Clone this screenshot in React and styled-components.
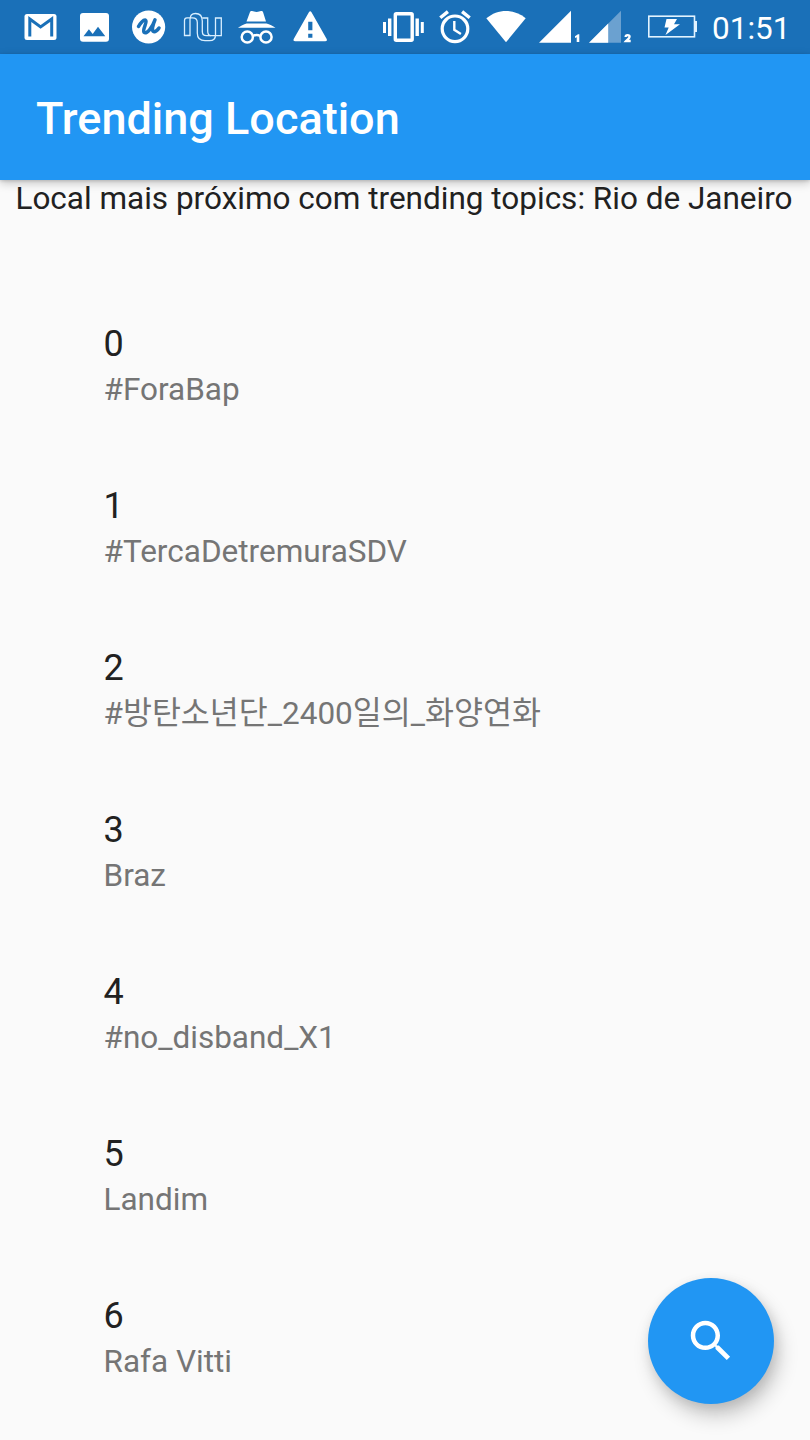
import React from "react";
import styled, { createGlobalStyle } from "styled-components";

const GlobalStyle = createGlobalStyle`
  * { box-sizing: border-box; }
  body { margin: 0; background: #fafafa; }
`;

const Screen = styled.div`
  position: relative;
  display: flex;
  flex-direction: column;
  width: 810px;
  height: 1440px;
  overflow: hidden;
  background: #fafafa;
  color: #212121;
  font-family: Roboto, "Noto Sans CJK KR", sans-serif;
`;

const StatusBar = styled.div`
  display: flex;
  flex: none;
  justify-content: space-between;
  height: 54px;
  padding: 0 20px 0 13px;
  background: #1a70b8;
  color: #fff;
`;

const IconGroup = styled.div`
  display: flex;
`;

const StatusIcon = styled.svg`
  display: block;
  width: ${(p) => p.$width || 54}px;
  height: 54px;
`;

const Clock = styled.span`
  width: 78px;
  margin-left: 14px;
  font-size: 31.5px;
  line-height: 58px;
  white-space: nowrap;
`;

const AppBar = styled.header`
  z-index: 1;
  display: flex;
  flex: none;
  align-items: center;
  height: 126px;
  padding: 3px 36px 0;
  background: #2196f3;
  box-shadow: 0 3px 9px rgba(0, 0, 0, 0.22), 0 1px 3px rgba(0, 0, 0, 0.14);
`;

const Title = styled.h1`
  margin: 0;
  color: #fff;
  font-size: 45px;
  font-weight: 500;
  line-height: 54px;
  white-space: nowrap;
`;

const Nearest = styled.p`
  flex: none;
  height: 104px;
  margin: 0;
  padding-right: 2px;
  font-size: 31.5px;
  line-height: 37px;
  text-align: center;
  white-space: nowrap;
`;

const TopicList = styled.ul`
  margin: 0;
  padding: 0 0 0 103.5px;
  list-style: none;
`;

const Topic = styled.li`
  display: flex;
  flex-direction: column;
  height: 162px;
  padding-top: 39px;
  white-space: nowrap;
`;

const Rank = styled.span`
  font-size: 36px;
  line-height: 42px;
`;

const Name = styled.span`
  margin-top: 6px;
  color: #757575;
  font-size: 31.5px;
  line-height: 37px;
`;

const SearchButton = styled.button`
  position: absolute;
  right: 36px;
  bottom: 36px;
  display: flex;
  align-items: center;
  justify-content: center;
  width: 126px;
  height: 126px;
  padding: 0;
  border: 0;
  border-radius: 50%;
  background: #2196f3;
  box-shadow: 5px 12px 20px rgba(0, 0, 0, 0.2), 2px 4px 12px rgba(0, 0, 0, 0.1);
`;

const topics = [
  "#ForaBap",
  "#TercaDetremuraSDV",
  "#방탄소년단_2400일의_화양연화",
  "Braz",
  "#no_disband_X1",
  "Landim",
  "Rafa Vitti",
];

const Notifications = () => (
  <IconGroup>
    <StatusIcon viewBox="0 0 54 54">
      <rect x="11.5" y="14" width="32" height="26" rx="2.5" fill="#fff" />
      <path d="M16.8 36.6V19l10.8 8L38.7 19v17.6" fill="none" stroke="#1a70b8" strokeWidth="3" />
    </StatusIcon>
    <StatusIcon viewBox="0 0 54 54">
      <rect x="13" y="13" width="29" height="28.7" rx="3" fill="#fff" />
      <path d="M16.5 36.3l5.4-7 3.8 4.6 5.3-7.2 7.3 9.6z" fill="#1a70b8" />
    </StatusIcon>
    <StatusIcon viewBox="0 0 54 54">
      <circle cx="27.6" cy="27" r="16.6" fill="#fff" />
      <path
        d="M17.5 26.500C19 23.500 22.500 19.500 24.600 20.200C27 21.400 21 29.500 23 32.200C26 34.800 31.500 27 34 19.800C31.500 25.500 30.500 31 32.600 31.600C34.800 32 36.500 30.200 38 28"
        fill="none"
        stroke="#1a70b8"
        strokeWidth="3.5"
        strokeLinecap="round"
        strokeLinejoin="round"
      />
    </StatusIcon>
    <StatusIcon viewBox="0 0 54 54">
      <g fill="none" stroke="#d9efff" strokeWidth="1.3">
        <path d="M9.500 35.500V20.500Q9.500 17.800 12 17.800H17.500Q22.300 17.800 22.300 22.500V33Q22.300 40.700 30 40.700H34.500Q40.500 40.700 40.500 35V18H46.300V35.700H31.500Q27.300 35.700 27.300 31.500V21Q27.300 13.500 20.500 13.500Q15 13.500 15 19.500V35.500Z" />
        <path d="M27.300 18H32.700V31Q32.700 35.700 36 35.700" />
      </g>
    </StatusIcon>
    <StatusIcon viewBox="0 0 54 54">
      <path d="M21 12q.5-1.5 2-1l3.2.8q1.4.3 2.8 0l3-.8q1.5-.5 2 1l3 9.500H17.500zM9 27.800c2.500-2 6-3.600 8.500-4.400h20c3 .8 6.500 2.400 9 4.400z" fill="#fff" />
      <g fill="none" stroke="#fff" strokeWidth="2.500">
        <circle cx="18.300" cy="37" r="5.600" />
        <circle cx="37" cy="37" r="5.600" />
        <path d="M24 36q3.600-2 7.300 0" />
      </g>
    </StatusIcon>
    <StatusIcon viewBox="0 0 54 54">
      <path
        fillRule="evenodd"
        d="M25.900 12.300q1.300-2 2.600 0L43.700 39q.8 2.200-1.500 2.200H12.200q-2.300 0-1.500-2.200zM25.200 21.800v8.400h4.200v-8.400zM25.200 33.700v4h4.200v-4z"
        fill="#fff"
      />
    </StatusIcon>
  </IconGroup>
);

const SystemIcons = () => (
  <IconGroup>
    <StatusIcon $width={54} viewBox="378 0 54 54">
      <rect x="395.300" y="13.800" width="16.900" height="26.500" rx="1" fill="none" stroke="#fff" strokeWidth="3.400" />
      <path d="M383 22h3v11h-3zM388 18.500h3.400V36H388zM415.500 18.500h3.400V36h-3.400zM420.800 22h3v11h-3z" fill="#fff" />
    </StatusIcon>
    <StatusIcon $width={50} viewBox="432 0 50 54">
      <circle cx="455" cy="28.800" r="12.800" fill="none" stroke="#fff" strokeWidth="3.200" />
      <path d="M440.300 17.800l7.600-6.200M469.700 17.800l-7.600-6.200" stroke="#fff" strokeWidth="3.400" />
      <path d="M454.300 21v8.800l6.600 4.200" fill="none" stroke="#fff" strokeWidth="2.400" />
    </StatusIcon>
    <StatusIcon $width={52} viewBox="482 0 52 54">
      <path d="M486.300 18.300C498 8.500 514 8.500 525.700 18.300L506 42.300z" fill="#fff" />
    </StatusIcon>
    <StatusIcon $width={50} viewBox="534 0 50 54">
      <path d="M539 42.700L571 10.800v31.900z" fill="#fff" />
      <path d="M575 36.200l3-2h1.300V42h-2.600v-4.700l-1.700.7z" fill="#fff" />
    </StatusIcon>
    <StatusIcon $width={56} viewBox="584 0 56 54">
      <path d="M589 42.700L621 10.800v31.900z" fill="#6ba1d0" />
      <path d="M589 42.700L608.200 23.500v19.200z" fill="#fff" />
      <path d="M625.600 37c0-2.500 4-2.300 4-.2 0 1.500-2.300 2.700-3.600 4.200h4.700" fill="none" stroke="#fff" strokeWidth="2.300" />
    </StatusIcon>
    <StatusIcon $width={58} viewBox="640 0 58 54">
      <rect x="648.800" y="16.200" width="45.700" height="20.600" fill="none" stroke="#e2f3ff" strokeWidth="1.600" />
      <path d="M695 21h2v11h-2z" fill="#e2f3ff" />
      <path d="M666.500 19h10.500l-3 5.300h6L665.500 35l3.200-7.600H664.500z" fill="#fff" />
    </StatusIcon>
    <Clock>01:51</Clock>
  </IconGroup>
);

export default function App() {
  return (
    <>
      <GlobalStyle />
      <Screen>
        <StatusBar>
          <Notifications />
          <SystemIcons />
        </StatusBar>
        <AppBar>
          <Title>Trending Location</Title>
        </AppBar>
        <Nearest>Local mais próximo com trending topics: Rio de Janeiro</Nearest>
        <TopicList>
          {topics.map((name, i) => (
            <Topic key={name}>
              <Rank>{i}</Rank>
              <Name>{name}</Name>
            </Topic>
          ))}
        </TopicList>
        <SearchButton aria-label="Search">
          <svg width="54" height="54" viewBox="0 0 24 24" fill="#fff">
            <path d="M15.500 14h-.79l-.28-.27C15.410 12.590 16 11.110 16 9.500 16 5.910 13.090 3 9.500 3S3 5.910 3 9.500 5.910 16 9.500 16c1.610 0 3.090-.59 4.230-1.570l.27.28v.79l5 4.990L20.490 19l-4.990-5zm-6 0C7.010 14 5 11.990 5 9.500S7.010 5 9.500 5 14 7.010 14 9.500 11.990 14 9.500 14z" />
          </svg>
        </SearchButton>
      </Screen>
    </>
  );
}
